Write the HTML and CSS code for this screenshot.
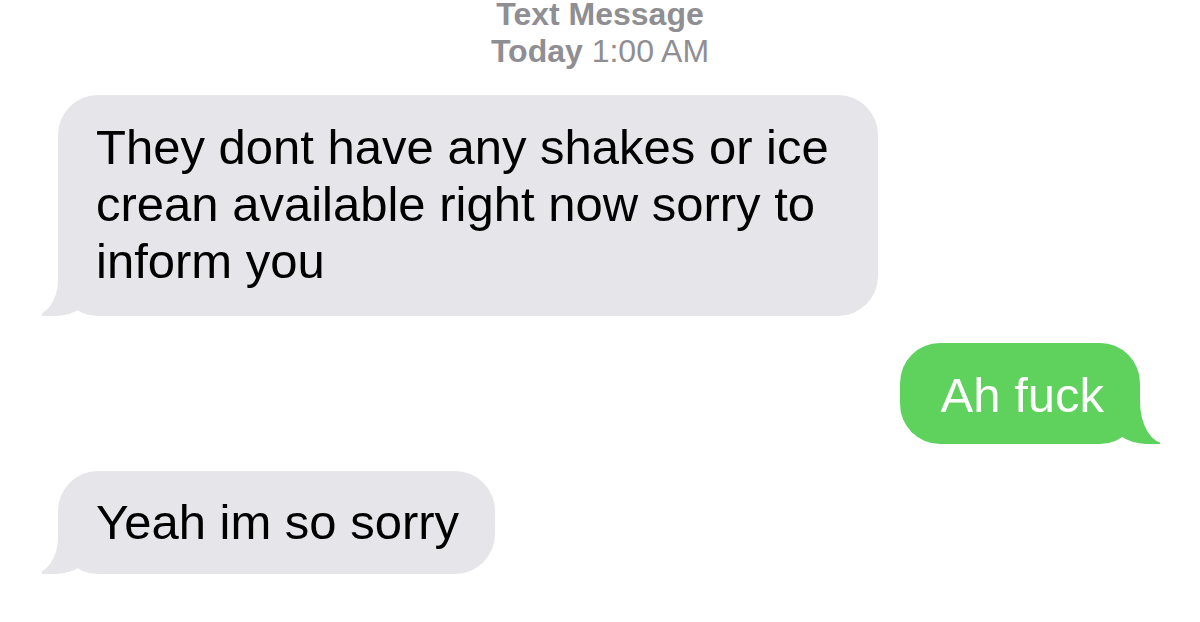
FILE: index.html
```
<!DOCTYPE html>
<html>
<head>
    <meta charset="utf-8">
    <link rel="stylesheet" href="styles.css">
</head>
<body>
    <div id="thread">
        <div class="thread-head">
            <div class="service">Text Message</div>
            <div class="stamp"><b>Today</b> 1:00 AM</div>
        </div>

        <div class="row in">
            <div class="bubble gray">They dont have any shakes or ice crean available right now sorry to inform you</div>
        </div>
        <div class="row out">
            <div class="bubble green">Ah fuck</div>
        </div>
        <div class="row in">
            <div class="bubble gray single">Yeah im so sorry</div>
        </div>
    </div>
</body>
</html>
```

FILE: styles.css
```
/* Messages thread */
:root {
    --bubble-gray: #e5e5ea;
    --bubble-green: #5fd25e;
    --meta-gray: #8e8e93;
}

body {
    margin: 0;
    background: white;
    font-family: "Liberation Sans", Arial, sans-serif;
    overflow: hidden;
}

#thread {
    display: flex;
    flex-direction: column;
    gap: 27px;
}

.thread-head {
    margin-top: -4px;
    margin-bottom: -2px;
    text-align: center;
    color: var(--meta-gray);
    font-size: 32px;
    line-height: 37px;
}

.service {
    font-weight: bold;
}

.row {
    display: flex;
}

.row.in {
    padding-left: 58px;
}

.row.out {
    justify-content: flex-end;
    padding-right: 60px;
}

.bubble {
    position: relative;
    box-sizing: border-box;
    max-width: 820px;
    border-radius: 40px;
    font-size: 49px;
    line-height: 57px;
}

.bubble.gray {
    background: var(--bubble-gray);
    color: black;
    padding: 24px 36px 26px 38px;
}

.bubble.gray.single {
    padding-top: 23px;
    padding-bottom: 23px;
}

.bubble.green {
    background: var(--bubble-green);
    color: white;
    padding: 24px 36px 20px 41px;
}

/* tails: a coloured lobe, carved out by a white one */
.bubble::before,
.bubble::after {
    content: "";
    position: absolute;
    bottom: 0;
    height: 56px;
}

.bubble.gray::before {
    left: -16px;
    width: 50px;
    background: var(--bubble-gray);
    border-bottom-right-radius: 36px 28px;
}

.bubble.gray::after {
    left: -60px;
    width: 60px;
    background: white;
    border-bottom-right-radius: 26px 36px;
}

.bubble.green::before {
    right: -20px;
    width: 50px;
    background: var(--bubble-green);
    border-bottom-left-radius: 36px 28px;
}

.bubble.green::after {
    right: -60px;
    width: 60px;
    background: white;
    border-bottom-left-radius: 26px 42px;
}
```
